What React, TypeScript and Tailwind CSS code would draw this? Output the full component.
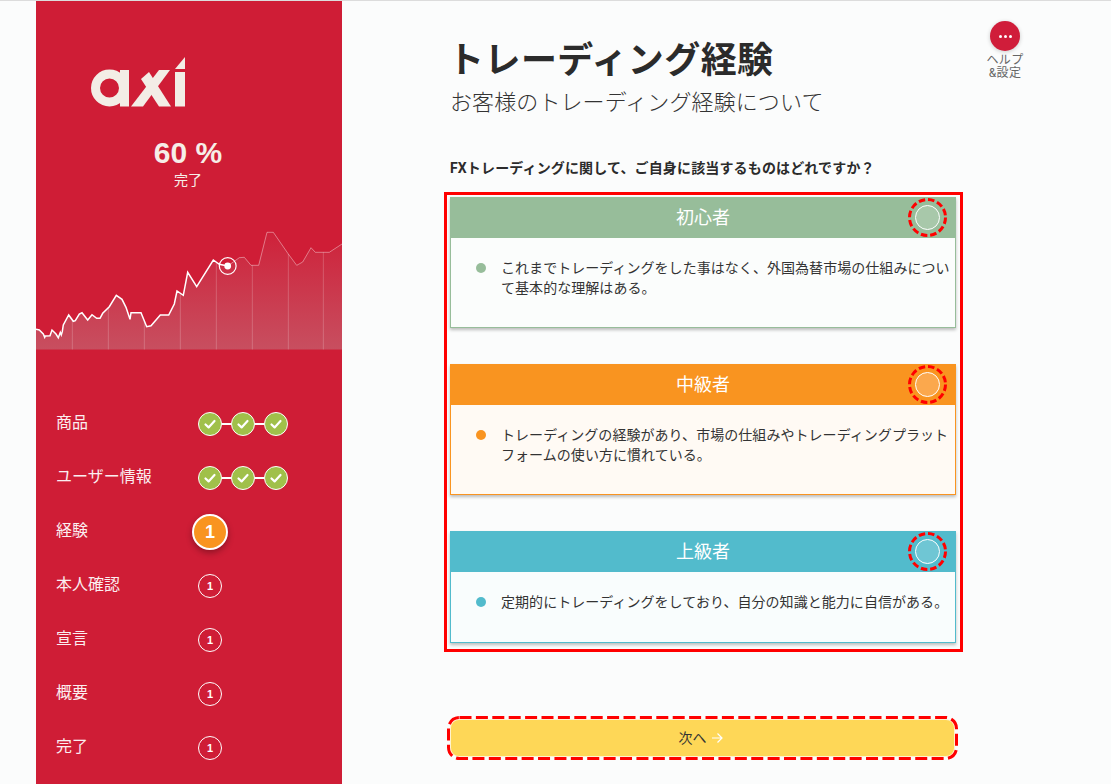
const font = "font-['Roboto','Noto_Sans_CJK_JP',sans-serif]"

const past = [
  [0, 328], [10, 330], [22, 342], [26, 352], [28, 348], [42, 347], [48, 330], [60, 342], [67, 353], [73, 337], [76, 345], [79, 335], [82, 315],
  [98, 285], [112, 304], [118, 302], [130, 282], [138, 278], [155, 300], [168, 284], [182, 295], [192, 295], [200, 280], [220, 260], [241, 226],
  [258, 238], [270, 262], [282, 298], [285, 278], [315, 278], [332, 320], [345, 317], [373, 285], [398, 285], [415, 252], [423, 213], [442, 226],
  [455, 157], [482, 200], [532, 120], [550, 133], [575, 138],
]
const future = [
  [575, 138], [610, 113], [625, 112], [645, 136], [668, 136], [693, 37], [712, 37], [757, 102], [782, 136], [800, 126], [825, 83], [838, 97], [880, 97], [918, 72],
]
const gridLines = [
  [109, 302], [217, 262], [325, 300], [433, 220], [541, 128], [649, 136], [757, 102], [862, 97],
]

const toPoints = (pts: number[][]) => pts.map(([x, y]) => `${(x / 3).toFixed(1)},${(y / 3).toFixed(1)}`).join(' ')

function Chart() {
  const area = `0,129.5 ${toPoints(past)} ${toPoints(future)} 306,129.5`
  return (
    <svg viewBox="0 0 306 130" className="block w-[306px] h-[130px]">
      <defs>
        <linearGradient id="area" x1="0" y1="0" x2="0" y2="1">
          <stop offset="0" stopColor="#b8b8b8" stopOpacity="0.03" />
          <stop offset="1" stopColor="#b8b8b8" stopOpacity="0.32" />
        </linearGradient>
      </defs>
      <polygon points={area} fill="url(#area)" />
      {gridLines.map(([x, y]) => (
        <line key={x} x1={x / 3} x2={x / 3} y1={y / 3} y2="129.5" stroke="#fff" strokeOpacity="0.2" />
      ))}
      <polyline points={toPoints(future)} fill="none" stroke="#fff" strokeOpacity="0.4" strokeWidth="1" />
      <polyline points={toPoints(past)} fill="none" stroke="#fff" strokeWidth="1.5" />
      <circle cx="191.7" cy="46" r="3.4" fill="#fff" />
      <circle cx="191.7" cy="46" r="8.4" fill="none" stroke="#fff" strokeWidth="1.2" />
    </svg>
  )
}

function Logo() {
  return (
    <svg viewBox="0 0 94 50" className="block w-[94px] h-[50px]" fill="#f3ede6">
      <circle cx="18.5" cy="31" r="14" fill="none" stroke="#f3ede6" strokeWidth="9" />
      <rect x="29" y="13" width="9" height="36.5" />
      <polygon points="68,13 79,13 52,49.5 40,49.5" />
      <polygon points="50,22 58,15 80,49.5 68,49.5" />
      <polygon points="84,15 94,15 94,49.5 84,49.5" />
      <polygon points="94,0 94,12 84,12" />
    </svg>
  )
}

function Check() {
  return (
    <div className="w-6 h-6 rounded-full bg-[#a0c04a] border border-white flex items-center justify-center">
      <svg viewBox="0 0 14 14" className="w-[14px] h-[14px]" fill="none" stroke="#fff" strokeWidth="2.2" strokeLinecap="round" strokeLinejoin="round">
        <path d="M2.5 7.5 5.6 10.4 11.5 4" />
      </svg>
    </div>
  )
}

function Checks() {
  return (
    <div className="flex items-center">
      <Check />
      <div className="w-[9px] h-[2px] bg-white" />
      <Check />
      <div className="w-[9px] h-[2px] bg-white" />
      <Check />
    </div>
  )
}

function Pending() {
  return (
    <div className="w-6 h-6 rounded-full border border-white flex items-center justify-center text-white text-[11px] font-bold font-['Liberation_Sans',sans-serif]">1</div>
  )
}

function Step({ label, children }: { label: string; children: React.ReactNode }) {
  return (
    <div className="h-[54px] flex items-center pl-5">
      <div className="w-[142px] pb-[3px] text-[#fbeef0] text-base leading-6">{label}</div>
      {children}
    </div>
  )
}

function Option({ title, text, color, tint, ring, bodyHeight }: { title: string; text: string; color: string; tint: string; ring: string; bodyHeight: string }) {
  return (
    <div className="shadow-[0_2px_3px_rgba(0,0,0,0.25)]" style={{ backgroundColor: tint }}>
      <div className="h-[41px] relative flex items-center justify-center text-white text-lg" style={{ backgroundColor: color }}>
        {title}
        <div className="absolute right-[9px] top-[1px] w-[39px] h-[39px] flex items-center justify-center">
          <svg viewBox="0 0 39 39" className="absolute inset-0 w-[39px] h-[39px]">
            <circle cx="19.5" cy="19.5" r="18" fill="none" stroke="#f00" strokeWidth="3" strokeDasharray="6.5 2.92" />
          </svg>
          <div className="w-[25px] h-[25px] rounded-full border border-white" style={{ backgroundColor: ring }} />
        </div>
      </div>
      <div className={`${bodyHeight} border border-t-0 flex pl-[25px] pr-1 pt-5`} style={{ borderColor: color }}>
        <div className="w-[10px] h-[10px] rounded-full mt-[5px] mr-[15px] shrink-0" style={{ backgroundColor: color }} />
        <p className="text-sm leading-[20px] tracking-[0.05px] text-[#333]">{text}</p>
      </div>
    </div>
  )
}

export default function App() {
  return (
    <div className={`${font} w-[1111px] h-[784px] overflow-hidden bg-[#fbfcfc] border-t border-[#dcdcdc] flex pl-9`}>
      {/* Sidebar */}
      <div className="w-[306px] h-[783px] bg-[#cf1d36] shrink-0">
        <div className="pl-[55px] pt-[56px]"><Logo /></div>
        <div className="mt-[28px] text-center pr-[2px] text-[#f6eee8]">
          <div className="text-[30px] leading-[36px] font-bold font-['Liberation_Sans',sans-serif]">60 %</div>
          <div className="mt-[1px] text-sm leading-4">完了</div>
        </div>
        <div className="mt-[32px]"><Chart /></div>
        <div className="mt-[47px]">
          <Step label="商品"><Checks /></Step>
          <Step label="ユーザー情報"><Checks /></Step>
          <Step label="経験">
            <div className="-ml-[6px] mb-[1px] w-9 h-9 rounded-full bg-[#f99420] border-2 border-white shadow-[0_3px_6px_rgba(0,0,0,0.3)] flex items-center justify-center text-white text-lg font-bold font-['Liberation_Sans',sans-serif]">1</div>
          </Step>
          <Step label="本人確認"><Pending /></Step>
          <Step label="宣言"><Pending /></Step>
          <Step label="概要"><Pending /></Step>
          <Step label="完了"><Pending /></Step>
        </div>
      </div>

      {/* Main */}
      <div className="flex-1 relative pl-[102px]">
        <div className="absolute left-[643px] top-5 w-[40px] flex flex-col items-center">
          <div className="w-[30px] h-[30px] rounded-full bg-[#d01d3a] shadow-[0_1px_4px_rgba(0,0,0,0.2)] flex items-center justify-center gap-[2px]">
            <span className="w-[3px] h-[3px] rounded-full bg-white" />
            <span className="w-[3px] h-[3px] rounded-full bg-white" />
            <span className="w-[3px] h-[3px] rounded-full bg-white" />
          </div>
          <div className="mt-[3px] text-[12px] leading-[13px] tracking-[0.3px] text-[#666] text-center whitespace-nowrap">ヘルプ<br />&amp;設定</div>
        </div>

        <div className="pl-[6px] pt-[38px]">
          <h1 className="-ml-[2px] text-[36px] leading-[44px] tracking-[0.45px] font-bold text-[#2b2b2b]">トレーディング経験</h1>
          <div className="mt-[4px] text-[22px] leading-[32px] tracking-[0.1px] font-light text-[#333]">お客様のトレーディング経験について</div>
          <div className="mt-[39px] text-sm leading-5 tracking-[0.15px] font-bold text-[#2b2b2b]">FXトレーディングに関して、ご自身に該当するものはどれですか？</div>
        </div>

        <div className="mt-[14px] w-[519px] h-[460px] border-[3px] border-[#f00] pt-[2px] pl-[3px] pr-[4px] flex flex-col gap-[36px]">
          <Option
            title="初心者"
            text="これまでトレーディングをした事はなく、外国為替市場の仕組みについて基本的な理解はある。"
            color="#97bd9a"
            tint="#fbfdfc"
            ring="#a8c8aa"
            bodyHeight="h-[90px]"
          />
          <Option
            title="中級者"
            text="トレーディングの経験があり、市場の仕組みやトレーディングプラットフォームの使い方に慣れている。"
            color="#f99420"
            tint="#fffaf4"
            ring="#fba84d"
            bodyHeight="h-[90px]"
          />
          <Option
            title="上級者"
            text="定期的にトレーディングをしており、自分の知識と能力に自信がある。"
            color="#52bbcc"
            tint="#f9fdfd"
            ring="#6fc6d4"
            bodyHeight="h-[71px]"
          />
        </div>

        <div className="relative mt-[64px] ml-[3px] w-[511px] h-[44px] p-[3px]">
          <div className="h-full rounded-[9px] bg-[#fed757] border border-white/70 flex items-center justify-center gap-1 pr-1 text-sm text-[#333]">
            次へ
            <svg viewBox="0 0 12 12" className="w-3 h-3" fill="none" stroke="#fff" strokeWidth="1.2">
              <path d="M1 6h10M6.5 1.5 11 6l-4.5 4.5" />
            </svg>
          </div>
          <svg viewBox="0 0 511 44" className="absolute inset-0 w-[511px] h-[44px]">
            <rect x="1.5" y="1.5" width="508" height="41" rx="11" fill="none" stroke="#f00" strokeWidth="3" strokeDasharray="12 4.4" />
          </svg>
        </div>
      </div>
    </div>
  )
}
